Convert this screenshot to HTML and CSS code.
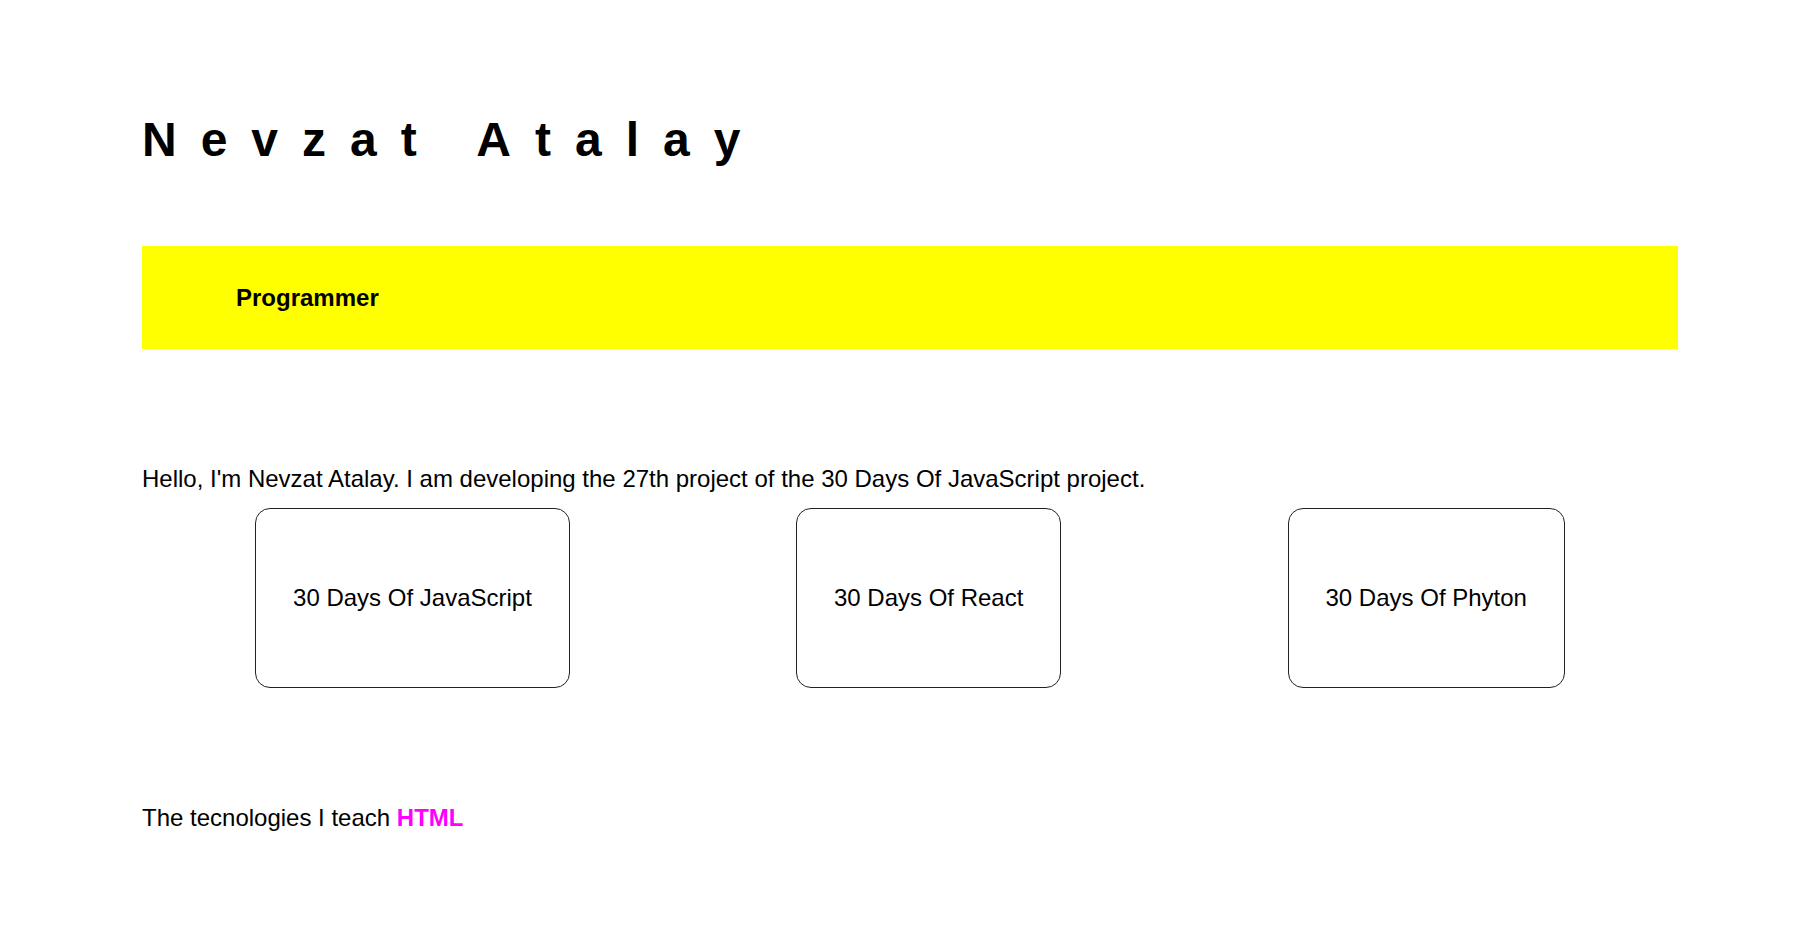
FILE: index.html
```html
<!DOCTYPE html>
<html lang="en">
<head>
<meta charset="utf-8">
<title>Nevzat Atalay</title>
<link rel="stylesheet" href="styles.css">
</head>
<body>
<div class="wrapper">
  <h1 class="name">Nevzat Atalay</h1>
  <div class="band">
    <h2 class="role">Programmer</h2>
  </div>
  <p class="intro">Hello, I'm Nevzat Atalay. I am developing the 27th project of the 30 Days Of JavaScript project.</p>
  <div class="cards">
    <div class="card">30 Days Of JavaScript</div>
    <div class="card">30 Days Of React</div>
    <div class="card">30 Days Of Phyton</div>
  </div>
  <p class="tech">The tecnologies I teach <span class="tech-name">HTML</span></p>
</div>
</body>
</html>
```

FILE: styles.css
```css
html, body {
  margin: 0;
  padding: 0;
  background: #ffffff;
}

body {
  font-family: "Liberation Sans", Arial, sans-serif;
  color: #000000;
}

.wrapper {
  width: 1536px;
  padding: 112px 0 0 142px;
}

.name {
  margin: 0;
  font-size: 48px;
  line-height: 55px;
  font-weight: 700;
  letter-spacing: 24px;
}

.band {
  margin-top: 79px;
  background: #ffff00;
  padding: 38px 0 38px 94px;
}

.role {
  margin: 0;
  font-size: 24px;
  line-height: 27px;
  font-weight: 700;
}

.intro {
  margin: 116px 0 0 0;
  font-size: 24px;
  line-height: 28px;
}

.cards {
  margin-top: 15px;
  display: flex;
  justify-content: space-around;
}

.card {
  height: 178px;
  padding: 0 37px;
  border: 1px solid #222222;
  border-radius: 15px;
  display: flex;
  align-items: center;
  justify-content: center;
  font-size: 24px;
}

.tech {
  margin: 116px 0 0 0;
  font-size: 24px;
  line-height: 28px;
}

.tech-name {
  color: #ff00ff;
  font-weight: 700;
}
```
